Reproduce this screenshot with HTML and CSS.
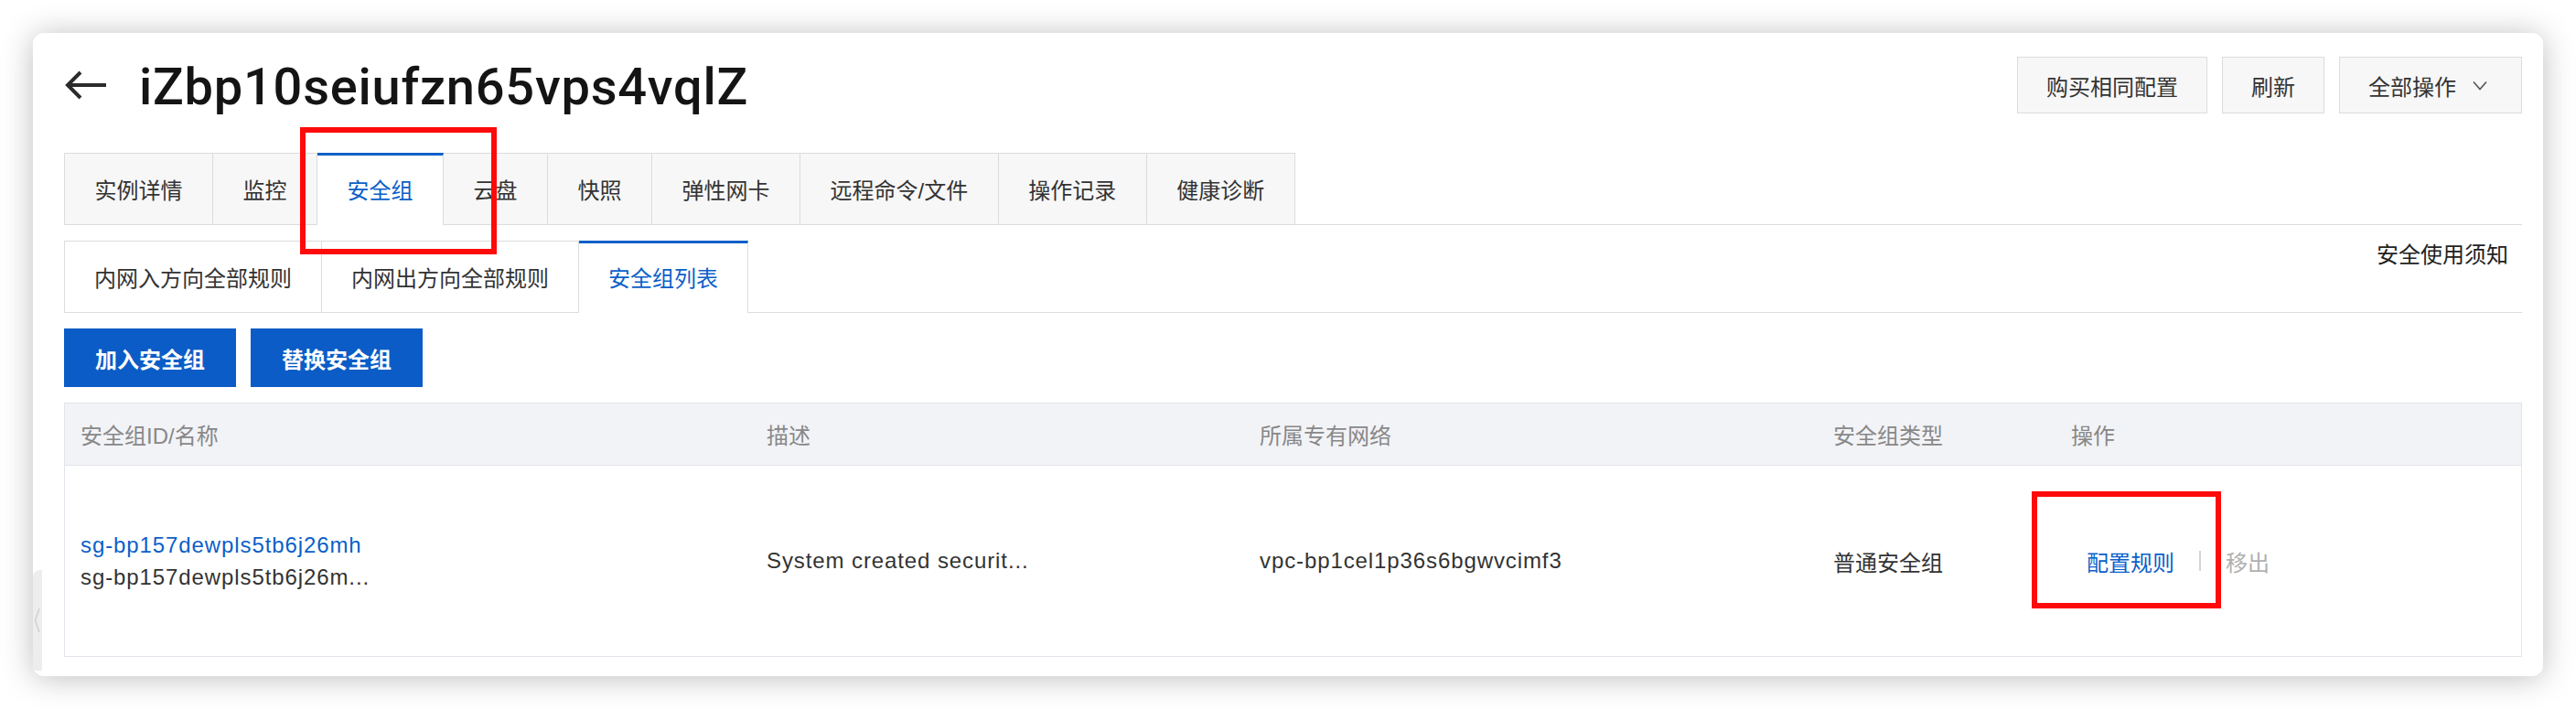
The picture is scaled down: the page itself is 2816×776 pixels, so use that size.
FILE: index.html
```html
<!DOCTYPE html>
<html lang="zh-CN">
<head>
<meta charset="utf-8">
<title>安全组</title>
<link rel="stylesheet" href="styles.css">
</head>
<body>
<div class="stage">
  <div class="card">
    <div class="header">
      <div class="title-wrap">
        <svg class="back" width="48" height="34" viewBox="0 0 48 34" aria-hidden="true">
          <path d="M46 17H4M18 3L4 17L18 31" fill="none" stroke="#2b2b2b" stroke-width="4"/>
        </svg>
        <h1 class="title">iZbp10seiufzn65vps4vqlZ</h1>
      </div>
      <div class="actions">
        <button class="btn">购买相同配置</button>
        <button class="btn">刷新</button>
        <button class="btn btn-drop">全部操作<svg class="chev" width="16" height="11" viewBox="0 0 16 11" aria-hidden="true"><path d="M1 1.5L8 9.5L15 1.5" fill="none" stroke="#555" stroke-width="1.6"/></svg></button>
      </div>
    </div>

    <div class="tabs">
      <div class="tab">实例详情</div>
      <div class="tab">监控</div>
      <div class="tab active">安全组</div>
      <div class="tab">云盘</div>
      <div class="tab">快照</div>
      <div class="tab">弹性网卡</div>
      <div class="tab">远程命令/文件</div>
      <div class="tab">操作记录</div>
      <div class="tab">健康诊断</div>
    </div>

    <div class="subtabs">
      <div class="subtab">内网入方向全部规则</div>
      <div class="subtab">内网出方向全部规则</div>
      <div class="subtab active">安全组列表</div>
      <span class="notice">安全使用须知</span>
    </div>

    <div class="toolbar">
      <button class="primary">加入安全组</button>
      <button class="primary">替换安全组</button>
    </div>

    <div class="table">
      <div class="row head">
        <div class="cell">安全组ID/名称</div>
        <div class="cell">描述</div>
        <div class="cell">所属专有网络</div>
        <div class="cell">安全组类型</div>
        <div class="cell">操作</div>
      </div>
      <div class="row body">
        <div class="cell stack">
          <a class="link latin">sg-bp157dewpls5tb6j26mh</a>
          <span class="latin">sg-bp157dewpls5tb6j26m...</span>
        </div>
        <div class="cell latin">System created securit...</div>
        <div class="cell latin">vpc-bp1cel1p36s6bgwvcimf3</div>
        <div class="cell">普通安全组</div>
        <div class="cell ops">
          <a class="link op-main">配置规则</a>
          <span class="sep"></span>
          <span class="disabled">移出</span>
        </div>
      </div>
    </div>

    <div class="side-handle">
      <svg width="8" height="30" viewBox="0 0 8 30" aria-hidden="true"><path d="M6 2L1.5 15L6 28" fill="none" stroke="#cfcfcf" stroke-width="1.4"/></svg>
    </div>
  </div>

  <div class="mark mark-tab"></div>
  <div class="mark mark-op"></div>
</div>
</body>
</html>
```

FILE: styles.css
```css
* { box-sizing: border-box; }

html, body {
  margin: 0;
  padding: 0;
  background: #ffffff;
}

body {
  font-family: "Liberation Sans", "Noto Sans CJK SC", sans-serif;
  color: #333333;
  font-size: 24px;
}

.stage {
  position: relative;
  width: 2816px;
  height: 776px;
  padding: 36px;
}

.card {
  position: relative;
  height: 703px;
  background: #ffffff;
  border-radius: 12px;
  box-shadow: 0 2px 34px rgba(0, 0, 0, 0.26);
  padding: 26px 23px 22px 34px;
}

/* header */
.header {
  display: flex;
  justify-content: space-between;
  align-items: center;
  height: 62px;
}

.title-wrap {
  display: flex;
  align-items: center;
  gap: 34px;
}

.back { display: block; }

.title {
  margin: 0;
  font-family: Roboto, "Liberation Sans", sans-serif;
  font-size: 56px;
  font-weight: 500;
  color: #141414;
  letter-spacing: 0.75px;
  line-height: 62px;
  position: relative;
  top: 2px;
}

.actions {
  display: flex;
  gap: 16px;
}

.btn {
  height: 62px;
  padding: 0 31px;
  border: 1px solid #dcdcdc;
  background: #f7f7f7;
  color: #333333;
  font-family: inherit;
  font-size: 24px;
  display: flex;
  align-items: center;
}

.btn-drop { padding-right: 37px; }
.chev { margin-left: 18px; }

/* main tabs */
.tabs {
  margin-top: 43px;
  display: flex;
  align-items: flex-start;
  border-bottom: 1px solid #dcdcdc;
}

.tab {
  height: 78px;
  padding: 0 32.5px;
  display: flex;
  align-items: center;
  background: #f7f7f7;
  border-top: 1px solid #dcdcdc;
  border-right: 1px solid #dcdcdc;
  color: #333333;
  white-space: nowrap;
}

.tab:first-child { border-left: 1px solid #dcdcdc; }

.tab.active {
  height: 79px;
  margin-bottom: -1px;
  background: #ffffff;
  border-top: 3px solid #0b5fc8;
  color: #0b5fc8;
  padding-bottom: 3px;
}

/* sub tabs */
.subtabs {
  margin-top: 17px;
  display: flex;
  align-items: flex-start;
  border-bottom: 1px solid #dcdcdc;
}

.subtab {
  height: 78px;
  padding: 0 32px;
  display: flex;
  align-items: center;
  background: #ffffff;
  border-top: 1px solid #dcdcdc;
  border-right: 1px solid #dcdcdc;
  color: #333333;
  white-space: nowrap;
}

.subtab:first-child { border-left: 1px solid #dcdcdc; }

.subtab.active {
  height: 79px;
  margin-bottom: -1px;
  border-top: 3px solid #0b5fc8;
  color: #0b5fc8;
  padding-bottom: 3px;
}

.notice {
  margin-left: auto;
  margin-right: 15px;
  line-height: 32px;
  color: #222222;
}

/* toolbar */
.toolbar {
  margin-top: 17px;
  display: flex;
  gap: 16px;
}

.primary {
  height: 64px;
  padding: 0 34px;
  border: none;
  background: #0b5cc6;
  color: #ffffff;
  font-family: inherit;
  font-size: 24px;
  font-weight: 700;
}

/* table */
.table {
  margin-top: 17px;
  border: 1px solid #e1e4ea;
}

.row {
  display: grid;
  grid-template-columns: 750px 539px 627px 260px 1fr;
}

.row.head {
  height: 68px;
  background: #f2f3f7;
  border-bottom: 1px solid #e1e4ea;
  color: #888888;
}

.row.body {
  height: 208px;
  color: #333333;
}

.cell {
  padding-left: 17px;
  display: flex;
  align-items: center;
  white-space: nowrap;
}

.cell.stack {
  flex-direction: column;
  align-items: flex-start;
  justify-content: center;
  line-height: 35px;
}

.latin { letter-spacing: 0.9px; }

.link {
  color: #0b5fc8;
  text-decoration: none;
}

.op-main { margin-left: 17px; }

.sep {
  width: 2px;
  height: 22px;
  background: #d4d4d4;
  margin: 0 27px;
}

.disabled { color: #b0b0b0; }

/* left collapse handle */
.side-handle {
  position: absolute;
  left: 0;
  top: 587px;
  width: 10px;
  height: 110px;
  background: #ededed;
  border-top-left-radius: 8px;
  display: flex;
  align-items: center;
  justify-content: center;
}

/* red annotation frames */
.mark {
  position: absolute;
  border: 6px solid #ff0a0a;
}

.mark-tab {
  left: 328px;
  top: 139px;
  width: 215px;
  height: 139px;
}

.mark-op {
  left: 2221px;
  top: 537px;
  width: 207px;
  height: 128px;
}
```
